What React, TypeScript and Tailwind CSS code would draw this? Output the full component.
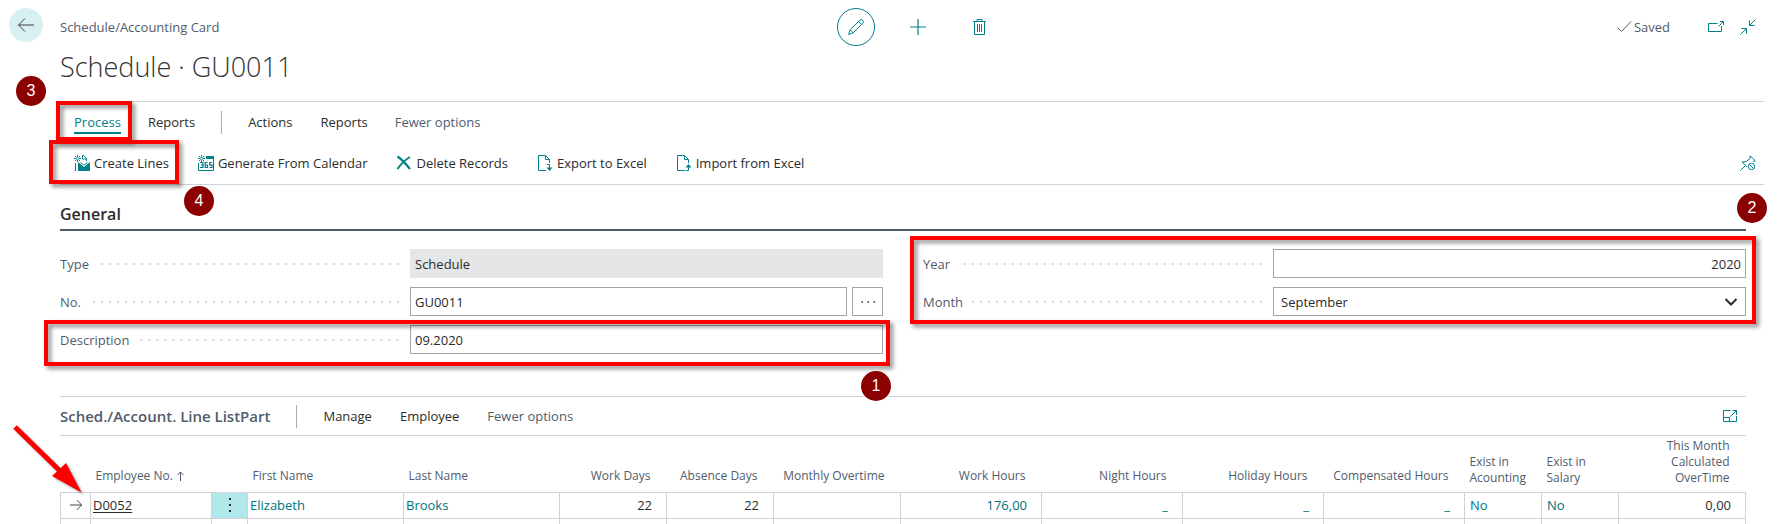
import type { ReactNode } from "react";

const FONT = "font-['Open_Sans','Noto_Sans',sans-serif]";

function Svg({ children, size = "size-4", box = "0 0 16 16" }: { children: ReactNode; size?: string; box?: string }) {
  return (
    <svg viewBox={box} className={`${size} shrink-0`} fill="none" stroke="currentColor" strokeWidth="1" aria-hidden="true">
      {children}
    </svg>
  );
}

const Spark = () => <path d="M3.500 0v2.500M3.500 4.500V7M0 3.500h2.500M4.500 3.500H7M1 1l1.600 1.600M4.400 4.400L6 6M6 1L4.400 2.600M2.600 4.400L1 6" />;

const CreateLinesIcon = () => (
  <Svg>
    <Spark />
    <path d="M8 .5h1.500l3 3V6M8.500 .5v3.500h4M1.500 8v8" />
    <path d="M4 7l6 5 6-5v9H4z" fill="currentColor" stroke="none" />
    <path d="M6.500 7.500l3.500 2.800 3.500-2.800" />
  </Svg>
);

const CalendarIcon = () => (
  <Svg>
    <path d="M8 1h8v3H8z" fill="currentColor" stroke="none" />
    <path d="M15.500 3.500v12H.5V8" />
    <Spark />
    <path d="M2 7.500h3v5H2M3 9.900h2M9.500 7.500H7.200v5h2.300v-2.500H7.200M14 7.500h-2.300v2.300H14v2.700h-2.500" strokeWidth="1.200" />
  </Svg>
);

const DeleteIcon = () => (
  <Svg>
    <path d="M1.500 1.500c3 2 8.500 7.500 12.500 12.500" strokeWidth="2.200" />
    <path d="M14 2C9.500 4.500 5 9 1.500 14" strokeWidth="2" />
  </Svg>
);

const ExportIcon = () => (
  <Svg>
    <path d="M9 15.500H1.500V.5h7l4 4V8M8.500 .5v4h4M10 9.500h2.500v4" />
    <path d="M9.500 12.500h6L12.500 16z" fill="currentColor" stroke="none" />
  </Svg>
);

const ImportIcon = () => (
  <Svg>
    <path d="M9 15.500H1.500V.5h7l4 4V8M8.500 .5v4h4M10 15.500h2.500v-4" />
    <path d="M9.500 12.500h6L12.500 9z" fill="currentColor" stroke="none" />
  </Svg>
);

const PinIcon = () => (
  <Svg>
    <path d="M.5 15.500l5-5M2.200 7l4.800 5M2.200 7l3.800-.3L10 3.500V.8l5.200 5-2.400.7" />
    <circle cx="11.500" cy="11.500" r="3.200" />
    <path d="M9.300 9.300l4.400 4.400" />
  </Svg>
);

function Callout({ n, className }: { n: number; className: string }) {
  return (
    <span
      className={`absolute z-20 flex size-[30px] items-center justify-center rounded-full bg-[#8b0000] font-['Liberation_Sans',sans-serif] text-base text-white ${className}`}
    >
      {n}
    </span>
  );
}

function Frame({ className }: { className: string }) {
  return (
    <span
      className={`pointer-events-none absolute z-10 border-4 border-[#ff0000] drop-shadow-[3px_3px_2px_rgba(0,0,0,0.45)] ${className}`}
    />
  );
}

function Field({ id, label, children }: { id: string; label: string; children: ReactNode }) {
  return (
    <div className="grid h-[29px] grid-cols-[350fr_473fr] items-stretch">
      <div className="flex items-center pr-[11px]">
        <label htmlFor={id} className="text-[#505c6d]">
          {label}
        </label>
        <span className="ml-2 h-0.5 flex-1 bg-[linear-gradient(to_left,#d3d6da_2px,transparent_2px)] bg-[length:8px_2px] bg-right bg-repeat-x" />
      </div>
      <div className="flex min-w-0 gap-[5px]">{children}</div>
    </div>
  );
}

const inputStyle = "h-full w-full min-w-0 border border-[#a3a5a8] bg-white px-1 text-[#2b2b2b] outline-none";

const columns = [
  { label: "First Name", width: "w-[156px]" },
  { label: "Last Name", width: "w-[156px]" },
  { label: "Work Days", width: "w-[107px]", right: true },
  { label: "Absence Days", width: "w-[107px]", right: true },
  { label: "Monthly Overtime", width: "w-[127px]", right: true },
  { label: "Work Hours", width: "w-[141px]", right: true },
  { label: "Night Hours", width: "w-[141px]", right: true },
  { label: "Holiday Hours", width: "w-[141px]", right: true },
  { label: "Compensated Hours", width: "w-[141px]", right: true },
];

const cell = "border border-[#d0d2d6] px-0.5";
const numCell = "border border-[#d0d2d6] pr-3.5 text-right";
const teal = "text-[#00727a]";

export default function App() {
  return (
    <div className={`relative h-screen overflow-hidden bg-white text-[13px] leading-5 text-[#2b2b2b] ${FONT}`}>
      <div className="pr-3.5 pl-[60px]">
        <header className="relative h-[101px]">
          <button
            type="button"
            aria-label="Back"
            className="absolute top-2 -left-[51px] flex size-[34px] items-center justify-center rounded-full bg-[#d9f0f2] text-[#3c3c3c]"
          >
            <Svg>
              <path d="M.5 8h15.500M7 1.500L.5 8l6.500 6.500" />
            </Svg>
          </button>
          <div className="grid grid-cols-[1fr_auto_1fr] pt-2">
            <p className="flex h-[38px] items-center text-[#505c6d]">Schedule/Accounting Card</p>
            <div className="flex h-[38px] items-center gap-[35px] text-[#008089]">
              <button type="button" aria-label="Edit" className="flex size-[38px] items-center justify-center rounded-full border border-current">
                <Svg>
                  <path d="M.6 15.400l1.500-4.600 9.600-9.500a2 2 0 0 1 3 3L5.200 13.900zM2.100 10.800l3.100 3.100M10.600 2.400l3 3" />
                </Svg>
              </button>
              <button type="button" aria-label="New">
                <Svg>
                  <path d="M8 0v16M0 8h16" strokeWidth="1.200" />
                </Svg>
              </button>
              <button type="button" aria-label="Delete" className="ml-2.5">
                <Svg>
                  <path d="M2 2.500h13M6 2.500v-2h5v2M3.500 2.500v13h10v-13M6.500 5v8M8.500 5v8M10.500 5v8" />
                </Svg>
              </button>
            </div>
            <div className="flex h-[38px] items-center justify-end gap-4 pr-2 text-[#008089]">
              <span className="mr-[22px] flex items-center gap-0.5 text-[#505c6d]">
                <Svg>
                  <path d="M1.500 8.500l4 4L15 2.500" />
                </Svg>
                Saved
              </span>
              <button type="button" aria-label="Open in new window">
                <Svg>
                  <path d="M9.500 4.500h-9v8h13V7M10.500 7.500l5-5M12 2.500h3.500V6" />
                </Svg>
              </button>
              <button type="button" aria-label="Collapse">
                <Svg>
                  <path d="M.5 15.500l6-6M1.500 9.500h5v5M15.500 .5l-6 6M9.500 1.500v5h5" />
                </Svg>
              </button>
            </div>
          </div>
          <h1 className="text-[27px] leading-[42px] font-light text-[#333]">Schedule · GU0011</h1>
          <Callout n={3} className="top-[76px] -left-[44px]" />
        </header>

        <div className="border-t border-b border-[#d0d2d6] pl-3.5">
          <nav className="flex h-10 items-center">
            <div className="relative">
              <button type="button" className="block border-b-2 border-[#008089] pt-0.5 text-[#008089]">
                Process
              </button>
              <Frame className="-top-[9px] -left-[18px] h-[40px] w-[76px]" />
            </div>
            <button type="button" className="ml-[27px]">Reports</button>
            <span className="mx-[26px] h-[23px] w-px bg-[#a6adb8]" />
            <button type="button">Actions</button>
            <button type="button" className="ml-7">Reports</button>
            <button type="button" className="ml-[27px] text-[#505c6d]">Fewer options</button>
          </nav>
          <div className="relative flex h-[42px] items-center gap-[29px] pr-2">
            <div className="relative">
              <ActionButton icon={<CreateLinesIcon />} label="Create Lines" />
              <Frame className="-top-[13px] -left-[25px] h-[44px] w-[130px]" />
              <Callout n={4} className="top-[33px] left-[110px]" />
            </div>
            <ActionButton icon={<CalendarIcon />} label="Generate From Calendar" />
            <ActionButton icon={<DeleteIcon />} label="Delete Records" />
            <ActionButton icon={<ExportIcon />} label="Export to Excel" />
            <ActionButton icon={<ImportIcon />} label="Import from Excel" />
            <button type="button" aria-label="Unpin actions" className="ml-auto text-[#008089]">
              <PinIcon />
            </button>
          </div>
        </div>
      </div>

      <main className="pr-8 pl-[60px]">
        <section className="relative">
          <h2 className="h-[46px] border-b-2 border-[#505c6d] pt-[17px] text-base leading-6 font-semibold">General</h2>
          <Callout n={2} className="top-[8px] -right-[21px]" />
          <div className="grid grid-cols-2 items-start gap-10 pt-[18px] pb-[42px]">
            <div className="grid gap-[9px]">
              <Field id="type" label="Type">
                <input id="type" readOnly defaultValue="Schedule" className="h-full w-full min-w-0 bg-[#e5e6e8] px-[5px] text-[#2b2b2b] outline-none" />
              </Field>
              <Field id="no" label="No.">
                <input id="no" defaultValue="GU0011" className={inputStyle} />
                <button type="button" aria-label="Look up number" className="flex w-[31px] shrink-0 items-center justify-center border border-[#a3a5a8]">
                  <Svg>
                    <path d="M1.500 8h1.500M7.500 8h1.500M13.500 8h1.500" strokeWidth="1.500" />
                  </Svg>
                </button>
              </Field>
              <div className="relative">
                <Field id="description" label="Description">
                  <input id="description" defaultValue="09.2020" className={inputStyle} />
                </Field>
                <Frame className="-top-[5px] -right-[7px] -bottom-3 -left-4" />
                <Callout n={1} className="top-[46px] -right-[8px]" />
              </div>
            </div>
            <div className="relative grid gap-[9px]">
              <Field id="year" label="Year">
                <input id="year" defaultValue="2020" className={`${inputStyle} text-right`} />
              </Field>
              <Field id="month" label="Month">
                <div className="relative h-full w-full">
                  <select id="month" defaultValue="September" className="h-full w-full appearance-none border border-[#a3a5a8] bg-white px-[7px] text-[#2b2b2b] outline-none">
                    <option>August</option>
                    <option>September</option>
                    <option>October</option>
                  </select>
                  <span className="pointer-events-none absolute inset-y-0 right-[7px] flex items-center">
                    <Svg>
                      <path d="M2.500 5l5.500 5.500L13.500 5" strokeWidth="2" />
                    </Svg>
                  </span>
                </div>
              </Field>
              <Frame className="-top-[13px] -right-[10px] -bottom-2 -left-[13px]" />
            </div>
          </div>
        </section>

        <section>
          <div className="flex h-10 items-center border-y border-[#d0d2d6] pr-2">
            <h2 className="text-[15px] font-semibold text-[#505c6d]">Sched./Account. Line ListPart</h2>
            <span className="mx-[26px] h-[23px] w-px bg-[#a6adb8]" />
            <button type="button">Manage</button>
            <button type="button" className="ml-7">Employee</button>
            <button type="button" className="ml-7 text-[#505c6d]">Fewer options</button>
            <button type="button" aria-label="Expand list" className="ml-auto text-[#008089]">
              <Svg>
                <path d="M8.500 2.500h-7v11h13V8M1.500 9.500h6v4M8.500 8.500l6-6M10.500 2.500h4V7" />
              </Svg>
            </button>
          </div>
          <table className="w-full table-fixed border-collapse">
            <thead>
              <tr className="h-[56px] text-xs leading-4 text-[#505c6d] [&>th]:pb-1.5 [&>th]:align-bottom [&>th]:font-normal">
                <th className="w-[30px]" aria-label="Selected" />
                <th className="w-[121px] pl-[5px] text-left">
                  <span className="flex items-center gap-1 pb-0.5">
                    Employee No.
                    <svg viewBox="0 0 7 10" className="h-2.5 w-[7px]" fill="none" stroke="currentColor" aria-hidden="true">
                      <path d="M3.500 10V.8M.5 4l3-3 3 3" />
                    </svg>
                  </span>
                </th>
                <th className="w-[36px]" aria-label="Row menu" />
                {columns.map((c) => (
                  <th key={c.label} className={`${c.width} ${c.right ? "pr-4 text-right" : "pl-[5px] text-left"}`}>
                    <span className="block pb-0.5 whitespace-nowrap">{c.label}</span>
                  </th>
                ))}
                <th className="w-[77px] pl-[5px] text-left">Exist in Acounting</th>
                <th className="w-[77px] pl-[5px] text-left">Exist in<br />Salary</th>
                <th className="w-[127px] pr-4 text-right">This Month<br />Calculated<br />OverTime</th>
              </tr>
            </thead>
            <tbody>
              <tr className="h-[26px]">
                <td className={cell}>
                  <span className="flex justify-center">
                    <Svg size="size-3.5">
                      <path d="M1 8h13.500M9 2.500L14.500 8 9 13.500" />
                    </Svg>
                  </span>
                </td>
                <td className={cell}>
                  <a href="#D0052" className="underline underline-offset-2">D0052</a>
                </td>
                <td className="border border-[#d0d2d6] bg-[#b0e8eb]">
                  <button type="button" aria-label="Show more options" className="flex w-full justify-center">
                    <svg viewBox="0 0 2 14" className="h-3.5 w-0.5" fill="currentColor" aria-hidden="true">
                      <path d="M0 0h2v2H0zM0 6h2v2H0zM0 12h2v2H0z" />
                    </svg>
                  </button>
                </td>
                <td className={`${cell} ${teal}`}>Elizabeth</td>
                <td className={`${cell} ${teal}`}>Brooks</td>
                <td className={numCell}>22</td>
                <td className={numCell}>22</td>
                <td className={numCell} />
                <td className={`${numCell} ${teal}`}>176,00</td>
                <td className={`${numCell} ${teal}`}>_</td>
                <td className={`${numCell} ${teal}`}>_</td>
                <td className={`${numCell} ${teal}`}>_</td>
                <td className={`border border-[#d0d2d6] pl-[5px] ${teal}`}>No</td>
                <td className={`border border-[#d0d2d6] pl-[5px] ${teal}`}>No</td>
                <td className={numCell}>0,00</td>
              </tr>
              <tr className="h-[26px]">
                {Array.from({ length: 15 }, (_, i) => (
                  <td key={i} className={cell} />
                ))}
              </tr>
            </tbody>
          </table>
        </section>
      </main>

      <svg
        viewBox="0 0 80 80"
        className="pointer-events-none absolute top-[420px] left-[8px] size-20 drop-shadow-[2px_2px_1px_rgba(0,0,0,0.35)]"
        aria-hidden="true"
      >
        <path d="M7 7L52 51" stroke="#ff0000" strokeWidth="5" />
        <path d="M73.500 72.500L58 43 44 56z" fill="#ff0000" />
      </svg>
    </div>
  );
}

function ActionButton({ icon, label }: { icon: ReactNode; label: string }) {
  return (
    <button type="button" className="flex items-center gap-1 whitespace-nowrap">
      <span className="text-[#008089]">{icon}</span>
      {label}
    </button>
  );
}
